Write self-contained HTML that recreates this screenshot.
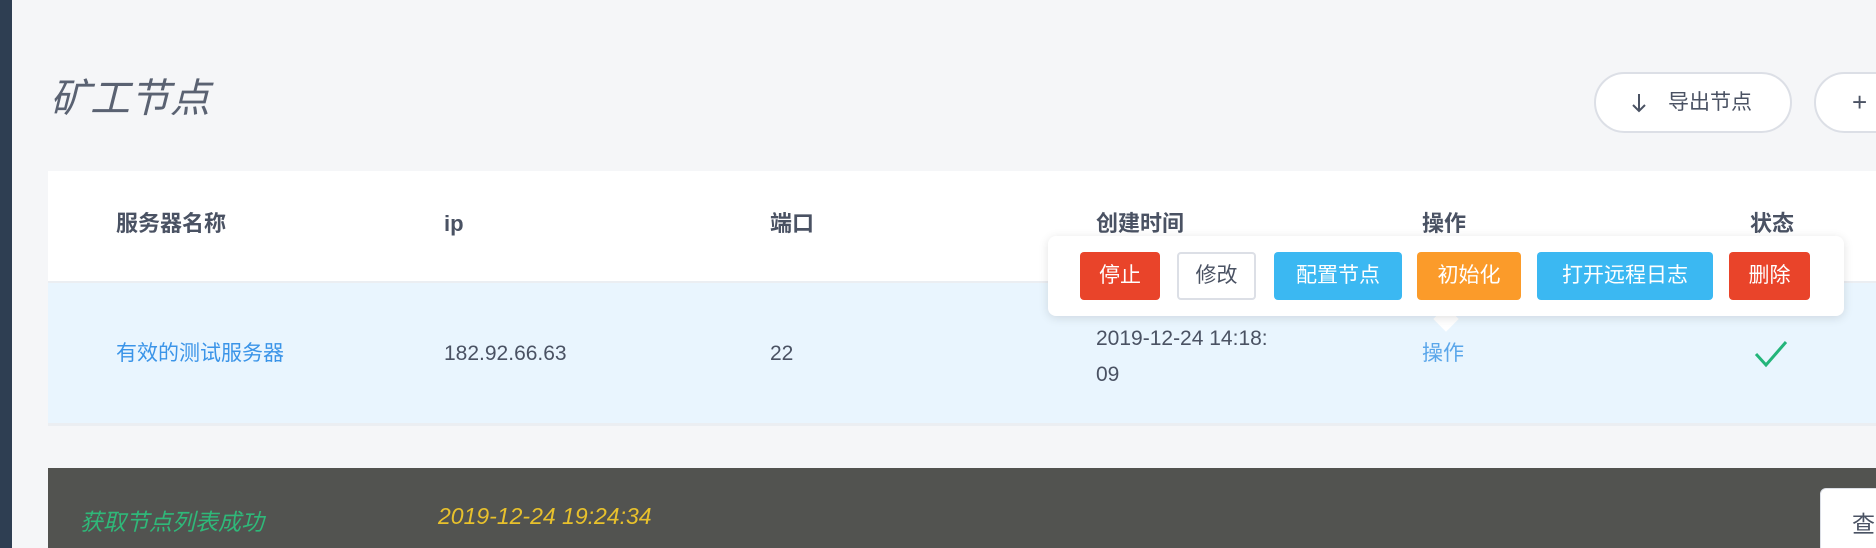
<!DOCTYPE html>
<html><head><meta charset="utf-8"><style>
*{margin:0;padding:0;box-sizing:border-box}
html,body{width:1876px;height:548px;overflow:hidden}
body{background:#f5f6f8;position:relative;font-family:"Liberation Sans","Noto Sans CJK SC",sans-serif;color:#4a5263}
.a{position:absolute;white-space:nowrap}
.side{left:0;top:0;width:12px;height:548px;background:#2e3e52}
.title{left:50px;top:75px;font-size:40px;font-style:italic;color:#5a6272;line-height:48px}
.pill{top:72px;height:61px;border:2px solid #dcdfe6;border-radius:31px;background:#fff;font-size:21px;line-height:57px;color:#4a5263}
.panel{left:48px;top:171px;width:1828px;height:255px;background:#fff}
.row{left:48px;top:281px;width:1828px;height:145px;background:#e9f5fe;border-top:2px solid #ebeef2;border-bottom:3px solid #ebeef2}
.th{top:210px;font-size:22px;font-weight:bold;color:#4a5263;line-height:28px}
.td{top:340px;font-size:21px;line-height:28px;color:#4a5263}
.bar{left:48px;top:468px;width:1828px;height:90px;background:#525350}
.pop{left:1048px;top:236px;width:796px;height:80px;background:#fff;border-radius:8px;box-shadow:0 2px 10px rgba(0,0,0,.12)}
.arrow{left:1437px;top:310px;width:18px;height:18px;background:#fff;transform:rotate(45deg)}
.b{top:252px;height:48px;border-radius:4px;color:#fff;font-size:21px;line-height:48px;text-align:center}
</style></head><body>
<div class="a side"></div>
<div class="a title">矿工节点</div>
<div class="a pill" style="left:1594px;width:198px;padding-left:72px">导出节点</div>
<svg class="a" style="left:1631px;top:92px" width="16" height="22" viewBox="0 0 16 22"><path d="M8 2 V19 M2 13 L8 19 L14 13" fill="none" stroke="#4a5263" stroke-width="2"/></svg>
<div class="a pill" style="left:1814px;width:100px;padding-left:36px;font-size:26px">+</div>
<div class="a panel"></div>
<div class="a row"></div>
<div class="a th" style="left:116px">服务器名称</div>
<div class="a th" style="left:444px">ip</div>
<div class="a th" style="left:770px">端口</div>
<div class="a th" style="left:1096px">创建时间</div>
<div class="a th" style="left:1422px">操作</div>
<div class="a th" style="left:1750px">状态</div>
<div class="a td" style="left:116px;color:#3a94e8">有效的测试服务器</div>
<div class="a td" style="left:444px">182.92.66.63</div>
<div class="a td" style="left:770px">22</div>
<div class="a td" style="left:1096px;top:321px;line-height:36px">2019-12-24 14:18:<br>09</div>
<div class="a td" style="left:1422px;color:#5aa6ea">操作</div>
<svg class="a" style="left:1754px;top:340px" width="34" height="28" viewBox="0 0 34 28"><path d="M2 14 L12 25 L32 2" fill="none" stroke="#23b57a" stroke-width="3"/></svg>
<div class="a bar"></div>
<div class="a" style="left:80px;top:503px;font-size:23px;font-style:italic;color:#2fb879">获取节点列表成功</div>
<div class="a" style="left:438px;top:503px;font-size:23px;font-style:italic;color:#e8c12c">2019-12-24 19:24:34</div>
<div class="a" style="left:1820px;top:488px;width:70px;height:70px;background:#fff;border:1px solid #dcdfe6;border-radius:6px"></div>
<div class="a" style="left:1852px;top:505px;font-size:23px;color:#4a5263">查</div>
<div class="a arrow"></div>
<div class="a pop"></div>
<div class="a b" style="left:1080px;width:80px;background:#e9442a">停止</div>
<div class="a b" style="left:1177px;width:79px;background:#fff;border:2px solid #dcdfe6;color:#4a5263;line-height:44px">修改</div>
<div class="a b" style="left:1274px;width:128px;background:#3bb8f2">配置节点</div>
<div class="a b" style="left:1417px;width:104px;background:#fb9b2a">初始化</div>
<div class="a b" style="left:1537px;width:176px;background:#3bb8f2">打开远程日志</div>
<div class="a b" style="left:1729px;width:81px;background:#e9442a">删除</div>
</body></html>
